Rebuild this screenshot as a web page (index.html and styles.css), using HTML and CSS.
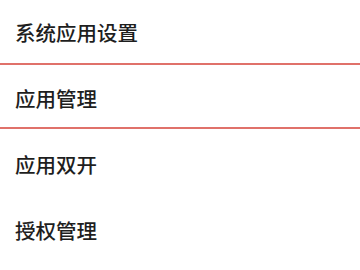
FILE: index.html
```html
<!DOCTYPE html>
<html lang="zh-CN">
<head>
  <meta charset="UTF-8">
  <meta name="viewport" content="width=device-width, initial-scale=1.0">
  <title>应用设置</title>
  <link rel="stylesheet" href="styles.css">
</head>
<body>
  <div class="menu">
    <div class="menu-item line-low">系统应用设置</div>
    <div class="menu-item line-high">应用管理</div>
    <div class="menu-item">应用双开</div>
    <div class="menu-item">授权管理</div>
  </div>
</body>
</html>
```

FILE: styles.css
```css
body {
  margin: 0;
  background-color: #fff;
  font-family: "Noto Sans CJK SC", "Noto Sans", sans-serif;
}
.menu {
  display: flex;
  flex-direction: column;
}
.menu-item {
  height: 66px;
  display: flex;
  align-items: center;
  padding: 0 15px 2px;
  box-sizing: border-box;
  font-size: 20.5px;
  font-weight: 500;
  color: #1e1e1e;
  background-repeat: no-repeat;
  background-size: 100% 2px;
}
/* red divider under a row */
.menu-item.line-low {
  background-image: linear-gradient(#e0716a, #e0716a);
  background-position: 0 63px;
}
.menu-item.line-high {
  background-image: linear-gradient(#e0716a, #e0716a);
  background-position: 0 61px;
}
```
